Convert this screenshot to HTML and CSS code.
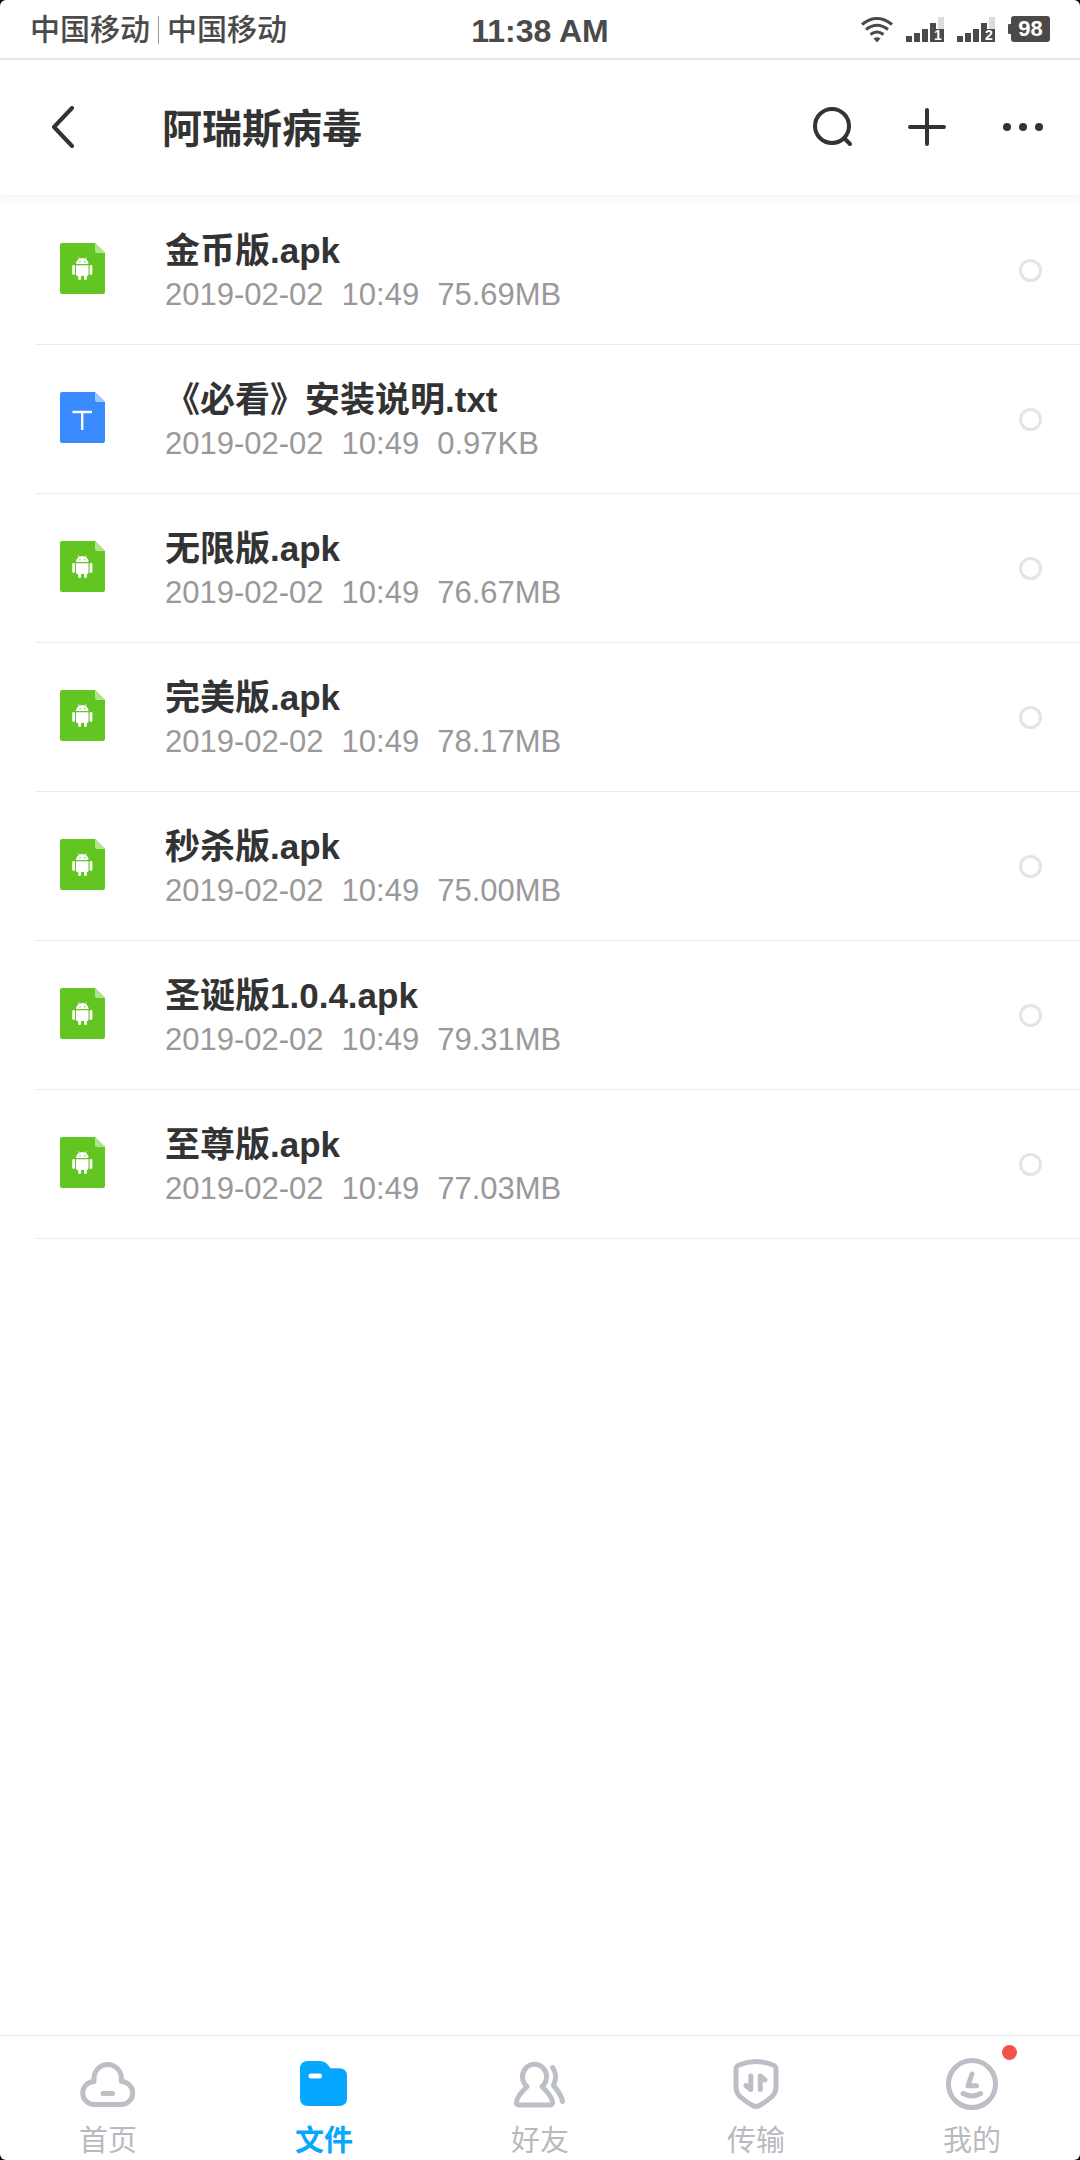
FILE: index.html
```html
<!DOCTYPE html>
<html lang="zh-CN">
<head>
	<meta charset="utf-8">
	<meta name="viewport" content="width=device-width">
	<title>阿瑞斯病毒</title>
	<link rel="stylesheet" href="styles.css">
</head>
<body>
	<!-- 图标 -->
	<svg class="defs">
		<symbol id="apk" viewBox="0 0 45 51">
			<path fill="#62c522" d="M2 0H35L45 10V48.500Q45 51 43 51H2Q0 51 0 48.500V2Q0 0 2 0Z"/>
			<path fill="#b0e38f" d="M35 0L45 10H37Q35 10 35 8Z"/>
			<g fill="#fff">
				<path d="M16 21a6.300 6 0 0 1 12.600 0z"/>
				<path d="M16 22.200h12.500v9.300q0 1.500-1.500 1.500h-.2v2.700a1.400 1.400 0 0 1-2.800 0V33h-3v2.700a1.400 1.400 0 0 1-2.800 0V33h-.7q-1.500 0-1.500-1.500z"/>
				<rect x="12.200" y="22" width="2.800" height="10" rx="1.400"/>
				<rect x="29.600" y="22" width="2.800" height="10" rx="1.400"/>
				<path d="M19.500 16.500l-1.300-2.300M25 16.500l1.300-2.300" stroke="#fff" stroke-width=".8"/>
			</g>
			<circle cx="20" cy="18.800" r=".7" fill="#62c522"/>
			<circle cx="24.700" cy="18.800" r=".7" fill="#62c522"/>
		</symbol>
		<symbol id="txt" viewBox="0 0 45 51">
			<path fill="#3a8aff" d="M2 0H35L45 10V48.500Q45 51 43 51H2Q0 51 0 48.500V2Q0 0 2 0Z"/>
			<path fill="#9ccbff" d="M35 0L45 10H37Q35 10 35 8Z"/>
			<path d="M12.500 20H32M22.200 20V38" fill="none" stroke="#fff" stroke-width="2.400"/>
		</symbol>
		<symbol id="signal" viewBox="0 0 38 25">
			<path fill="#4a4a4a" d="M0 19h6v6H0zM8 16h6v9H8zM16 12h6v13h-6zM24 6h6v6h8v13H24z"/>
			<path fill="#dcdcdc" d="M32 0h6v12h-6z"/>
		</symbol>
	</svg>

	<div class="screen">
		<div class="status">
			<div class="carrier"><span>中国移动</span><i></i><span>中国移动</span></div>
			<div class="time">11:38 AM</div>
			<div class="state">
				<svg class="wifi" viewBox="0 0 32 25" fill="none" stroke="#4a4a4a" stroke-width="3">
					<path d="M1 7.500Q16-4.500 31 7.500M5 12.500Q16 4 27 12.500M9.500 17.500Q16 12.500 22.500 17.500"/>
					<path fill="#4a4a4a" stroke="none" d="M12.500 21.500Q16 19 19.500 21.500L16 25.500Z"/>
				</svg>
				<svg class="signal" viewBox="0 0 38 25"><use href="#signal"/><text x="28" y="23">1</text></svg>
				<svg class="signal" viewBox="0 0 38 25"><use href="#signal"/><text x="28" y="23">2</text></svg>
				<span class="battery">98</span>
			</div>
		</div>

		<header class="header">
			<button class="back" aria-label="返回">
				<svg viewBox="0 0 44 44"><path d="M32 2L14 21L32 40"/></svg>
			</button>
			<h1>阿瑞斯病毒</h1>
			<div class="tools">
				<button aria-label="搜索">
					<svg viewBox="0 0 44 44"><circle cx="21" cy="20" r="17"/><path d="M34 33L39 38"/></svg>
				</button>
				<button aria-label="新建">
					<svg viewBox="0 0 44 44"><path d="M21 4V38M4 21H38"/></svg>
				</button>
				<button aria-label="更多">
					<svg class="dots" viewBox="0 0 44 44"><circle cx="6" cy="21" r="4"/><circle cx="22" cy="21" r="4"/><circle cx="38" cy="21" r="4"/></svg>
				</button>
			</div>
		</header>

		<ul class="list">
			<li>
				<svg class="icon"><use href="#apk"/></svg>
				<label class="info" for="f1">
					<span class="name">金币版.apk</span>
					<span class="meta"><span>2019-02-02</span><span>10:49</span><span>75.69MB</span></span>
				</label>
				<input type="checkbox" id="f1">
			</li>
			<li>
				<svg class="icon"><use href="#txt"/></svg>
				<label class="info" for="f2">
					<span class="name">《必看》安装说明.txt</span>
					<span class="meta"><span>2019-02-02</span><span>10:49</span><span>0.97KB</span></span>
				</label>
				<input type="checkbox" id="f2">
			</li>
			<li>
				<svg class="icon"><use href="#apk"/></svg>
				<label class="info" for="f3">
					<span class="name">无限版.apk</span>
					<span class="meta"><span>2019-02-02</span><span>10:49</span><span>76.67MB</span></span>
				</label>
				<input type="checkbox" id="f3">
			</li>
			<li>
				<svg class="icon"><use href="#apk"/></svg>
				<label class="info" for="f4">
					<span class="name">完美版.apk</span>
					<span class="meta"><span>2019-02-02</span><span>10:49</span><span>78.17MB</span></span>
				</label>
				<input type="checkbox" id="f4">
			</li>
			<li>
				<svg class="icon"><use href="#apk"/></svg>
				<label class="info" for="f5">
					<span class="name">秒杀版.apk</span>
					<span class="meta"><span>2019-02-02</span><span>10:49</span><span>75.00MB</span></span>
				</label>
				<input type="checkbox" id="f5">
			</li>
			<li>
				<svg class="icon"><use href="#apk"/></svg>
				<label class="info" for="f6">
					<span class="name">圣诞版1.0.4.apk</span>
					<span class="meta"><span>2019-02-02</span><span>10:49</span><span>79.31MB</span></span>
				</label>
				<input type="checkbox" id="f6">
			</li>
			<li>
				<svg class="icon"><use href="#apk"/></svg>
				<label class="info" for="f7">
					<span class="name">至尊版.apk</span>
					<span class="meta"><span>2019-02-02</span><span>10:49</span><span>77.03MB</span></span>
				</label>
				<input type="checkbox" id="f7">
			</li>
		</ul>

		<nav class="tabs">
			<a href="#home">
				<svg viewBox="0 0 64 64"><path d="M18 29.500V26.500a13.700 14 0 0 1 27.400 0v3a11.500 11.500 0 0 1-.4 23H18.500a11.500 11.500 0 0 1-.5-23M27 41.500h9.500"/></svg>
				<span>首页</span>
			</a>
			<a href="#files" class="active">
				<svg viewBox="0 0 64 64"><path class="folder" d="M8 17Q8 9 16 9H27Q33 9 36 13L38.500 16.300H47Q55 16.300 55 24V46Q55 54 47 54H16Q8 54 8 46Z"/><path class="tag" d="M19 24h8.500"/></svg>
				<span>文件</span>
			</a>
			<a href="#friends">
				<svg viewBox="0 0 64 64"><path d="M19 34.500A12 12.500 0 1 1 34 34.500C39 40 44 44 44.500 50Q45 53 42 53H11Q8 53 8.500 50C9 44 14 40 19 34.500Z"/><path d="M44.700 15.500C48.500 22 48.500 26 45.500 33.500C49 37.500 53.500 43 54.500 49.500"/></svg>
				<span>好友</span>
			</a>
			<a href="#transfer">
				<svg viewBox="0 0 64 64"><path d="M12 17Q12 14 15 13Q32 6 49 13Q52 14 52 17V35Q52 41 48 44.500Q42 50 35.500 53.500Q32 55.500 28.500 53.500Q22 50 16 44.500Q12 41 12 35Z"/><path d="M26.800 24V37.500L22 33.500M36.300 37.500V24L41 28"/></svg>
				<span>传输</span>
			</a>
			<a href="#mine">
				<svg viewBox="0 0 64 64"><circle cx="32" cy="32" r="23.500"/><path d="M32 22L28 33.700H36.500M23 41.500Q32 46.500 40.500 41.500"/></svg>
				<span>我的</span>
				<b class="badge"></b>
			</a>
		</nav>
	</div>
</body>
</html>
```
FILE: styles.css
```css
*{
	padding: 0;
	margin: 0;
	box-sizing: border-box;
}
html{
	background: #000;
}
body{
	font-family: "Liberation Sans", "Noto Sans CJK SC", sans-serif;
	color: #333;
}
li{
	list-style: none;
}
a{
	text-decoration: none;
}
svg{
	display: block;
}
button{
	border: 0;
	background: none;
	cursor: pointer;
}
.defs{
	position: absolute;
	width: 0;
	height: 0;
}
.screen{
	display: flex;
	flex-direction: column;
	min-height: 100vh;
	background: #fff;
	border-radius: 6px;
	overflow: hidden;
}
/* 状态栏 */
.status{
	display: grid;
	grid-template-columns: 1fr auto 1fr;
	align-items: center;
	height: 60px;
	padding: 0 30px;
	border-bottom: 2px solid #e9e9e9;
	color: #4a4a4a;
}
.carrier{
	display: flex;
	align-items: center;
	padding-top: 2px;
	font-size: 30px;
	font-weight: 500;
	line-height: 40px;
}
.carrier i{
	width: 1px;
	height: 28px;
	margin: 0 8px;
	background: #999;
}
.time{
	font-size: 32px;
	font-weight: bold;
	line-height: 40px;
	padding-top: 4px;
}
.state{
	display: flex;
	align-items: center;
	justify-content: flex-end;
	gap: 13px;
}
.wifi{
	width: 32px;
	height: 25px;
}
.signal{
	width: 38px;
	height: 25px;
}
.signal text{
	font-size: 14px;
	font-weight: bold;
	fill: #fff;
}
.battery{
	position: relative;
	width: 39px;
	margin-left: 3px;
	border-radius: 3px;
	background: #4a4a4a;
	color: #fff;
	font-size: 22px;
	font-weight: bold;
	line-height: 26px;
	text-align: center;
}
.battery:before{
	content: "";
	position: absolute;
	left: -3px;
	top: 8px;
	width: 3px;
	height: 10px;
	border-radius: 1px 0 0 1px;
	background: #4a4a4a;
}
/* 标题栏 */
.header{
	display: flex;
	align-items: center;
	height: 135px;
	padding: 0 35px 0 40px;
	box-shadow: 0 2px 10px rgba(0,0,0,.06);
}
.header svg{
	width: 44px;
	height: 44px;
	fill: none;
	stroke: #333;
	stroke-width: 4;
	stroke-linecap: round;
	stroke-linejoin: round;
}
.header .dots{
	fill: #333;
	stroke: none;
}
.header h1{
	flex: 1;
	margin-left: 78px;
	padding-bottom: 4px;
	font-size: 40px;
	font-weight: bold;
}
.tools{
	display: flex;
	gap: 51px;
}
/* 文件列表 */
.list{
	flex: 1;
	padding-top: 1px;
}
.list li{
	display: flex;
	align-items: center;
	height: 149px;
	margin-left: 35px;
	padding: 0 38px 0 25px;
	border-bottom: 1px solid #ebebeb;
}
.icon{
	width: 45px;
	height: 51px;
	margin-bottom: 4px;
}
.info{
	flex: 1;
	margin-left: 60px;
	padding-top: 6px;
}
.name{
	display: block;
	font-size: 35px;
	font-weight: bold;
	line-height: 44px;
}
.meta{
	display: flex;
	gap: 18px;
	font-size: 31px;
	line-height: 44px;
	color: #999;
}
.list input{
	appearance: none;
	width: 23px;
	height: 23px;
	border: 3px solid #e4e4e4;
	border-radius: 50%;
}
.list input:checked{
	border-color: #06a7ff;
	background: #06a7ff;
}
/* 底部导航 */
.tabs{
	display: flex;
	border-top: 1px solid #e4e9e9;
}
.tabs a{
	position: relative;
	flex: 1;
	display: flex;
	flex-direction: column;
	align-items: center;
	gap: 9px;
	padding: 16px 0 3px;
	color: #b8babf;
	font-size: 29px;
	line-height: 32px;
}
.tabs svg{
	width: 64px;
	height: 64px;
	fill: none;
	stroke: #bcbfc6;
	stroke-width: 5;
	stroke-linecap: round;
	stroke-linejoin: round;
}
.tabs .active{
	color: #06a7ff;
	font-weight: bold;
}
.tabs .folder{
	fill: #06a7ff;
	stroke: none;
}
.tabs .tag{
	stroke: #fff;
}
.badge{
	position: absolute;
	left: 50%;
	top: 9px;
	width: 15px;
	height: 15px;
	margin-left: 30px;
	border-radius: 50%;
	background: #f5514b;
}
```
